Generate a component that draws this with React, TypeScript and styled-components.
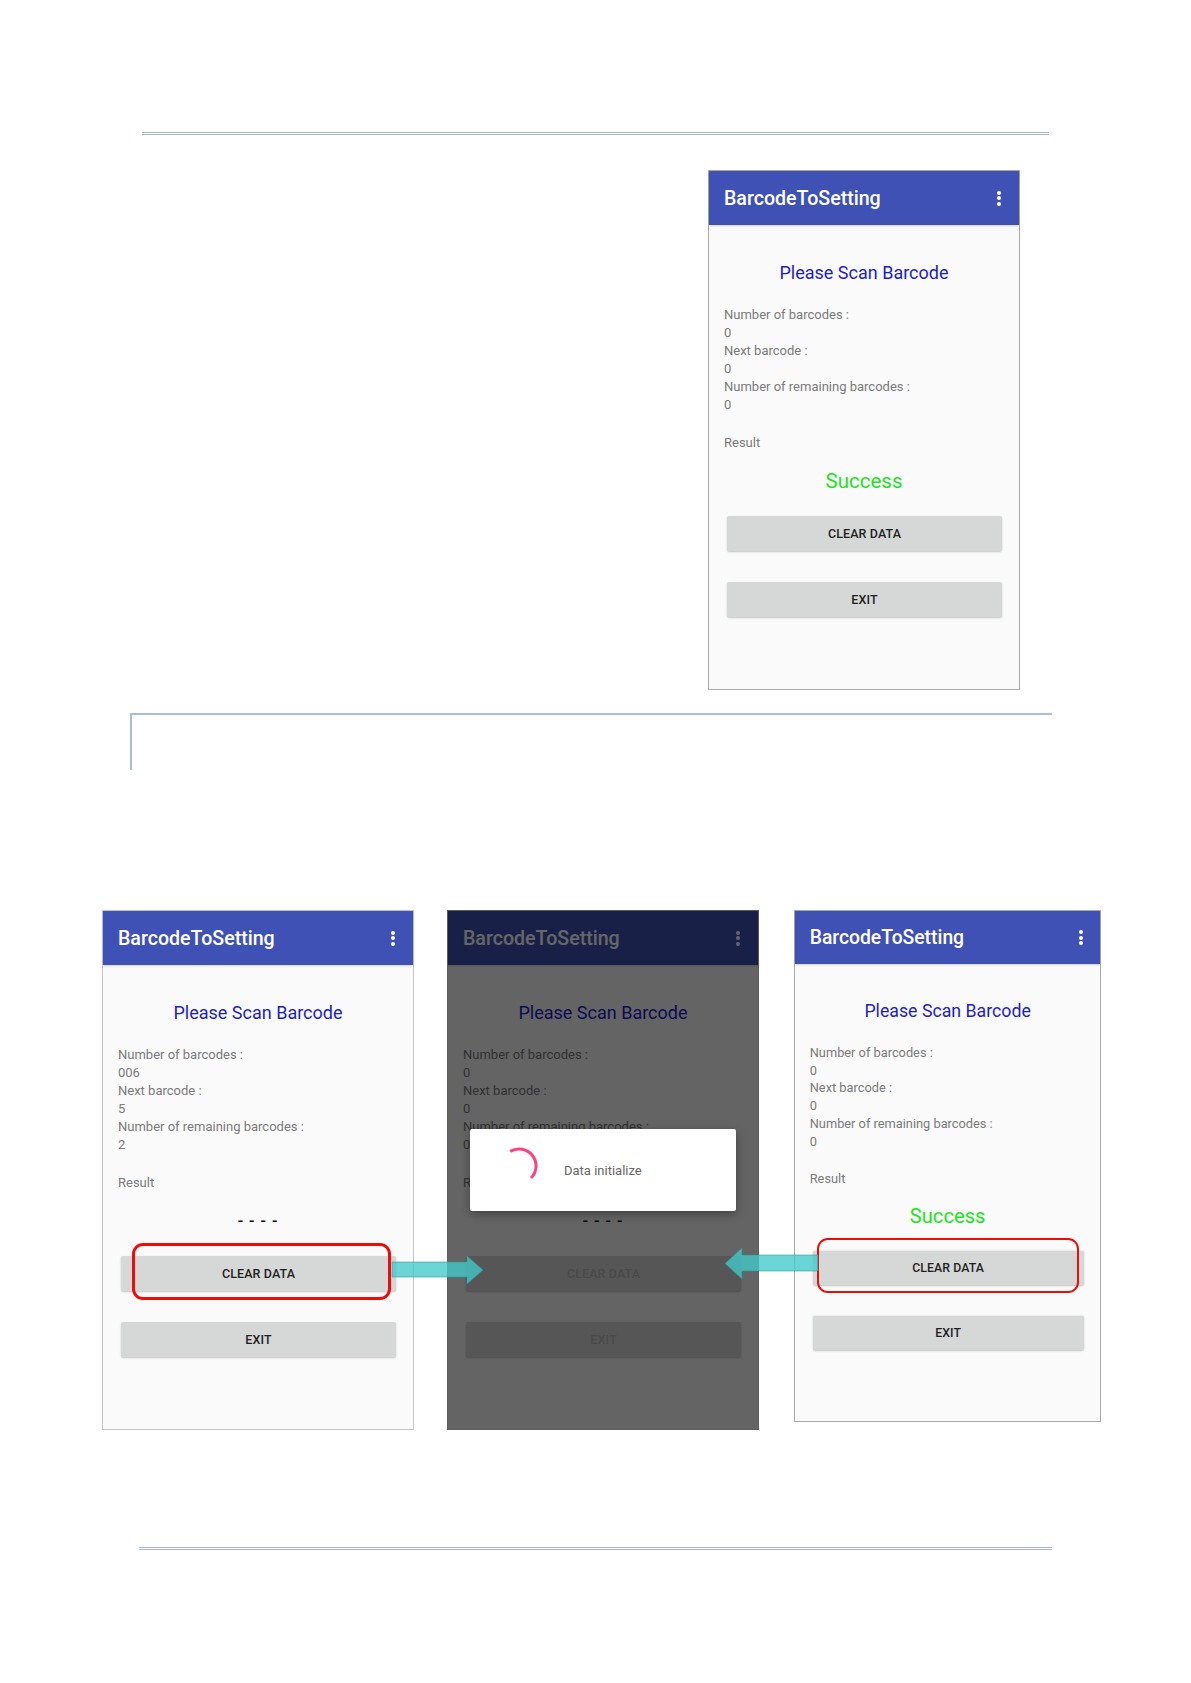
import styled, { createGlobalStyle } from 'styled-components';

type Offsets = { top: number; right: number; bottom: number; left: number };

const GlobalStyle = createGlobalStyle`
  html, body {
    margin: 0;
    padding: 0;
    background: #ffffff;
  }
  body {
    font-family: Roboto, 'Liberation Sans', sans-serif;
  }
`;

const Page = styled.div`
  width: 1191px;
  height: 1683px;
  box-sizing: border-box;
  padding-top: 132px;
  display: flex;
  flex-direction: column;
  background: #fff;
`;

const DoubleRule = styled.div<{ $left: number; $width: number; $top: number }>`
  margin: ${p => p.$top}px 0 0 ${p => p.$left}px;
  width: ${p => p.$width}px;
  height: 1px;
  border-top: 1px solid #a7b8ca;
  border-bottom: 1px solid #a7b8ca;
`;

const TopSection = styled.div`
  margin-top: 35px;
  padding-left: 708px;
  display: flex;
`;

const Bracket = styled.div`
  margin: 23px 0 0 130px;
  width: 920px;
  height: 55px;
  border-top: 2px solid #a9bedb;
  border-left: 2px solid #a9bedb;
`;

const Row = styled.div`
  position: relative;
  margin-top: 140px;
  padding-left: 102px;
  display: flex;
  align-items: flex-start;
  gap: 33px;
`;

const Phone = styled.div<{ $border: string; $zoom?: number; $shift?: number }>`
  position: relative;
  width: 312px;
  height: 520px;
  box-sizing: border-box;
  flex-shrink: 0;
  border: 1px solid ${p => p.$border};
  background: #fafafa;
  display: flex;
  flex-direction: column;
  zoom: ${p => p.$zoom ?? 1};
  margin-left: ${p => p.$shift ?? 0}px;
`;

const AppBar = styled.div`
  position: relative;
  height: 54px;
  flex-shrink: 0;
  background: #3f51b5;
  display: flex;
  align-items: center;
  justify-content: space-between;
  padding: 0 18px 0 15px;
  box-shadow: 0 1px 2px rgba(0, 0, 0, 0.16);
`;

const Title = styled.span`
  color: #ffffff;
  font-size: 19.6px;
  font-weight: 500;
`;

const Kebab = styled.div`
  display: flex;
  flex-direction: column;
  gap: 1.5px;
`;

const Dot = styled.span`
  width: 4px;
  height: 4px;
  border-radius: 50%;
  background: #ffffff;
`;

const Body = styled.div`
  flex: 1;
  display: flex;
  flex-direction: column;
  padding: 0 15px;
`;

const Heading = styled.div`
  margin-top: 37px;
  text-align: center;
  font-size: 18px;
  line-height: 22px;
  color: #1d1dcc;
`;

const InfoList = styled.div`
  margin-top: 22px;
  font-size: 13px;
  line-height: 18px;
  color: #7a7a7a;
`;

const InfoLine = styled.div`
  white-space: nowrap;
`;

const ResultLabel = styled.div`
  margin-top: 20px;
  font-size: 13px;
  line-height: 18px;
  color: #7a7a7a;
`;

const ResultValue = styled.div<{ $kind: 'success' | 'dashes' }>`
  margin-top: 16px;
  height: 26px;
  line-height: 26px;
  text-align: center;
  font-size: ${p => (p.$kind === 'success' ? '20.5px' : '16px')};
  font-weight: ${p => (p.$kind === 'success' ? 400 : 500)};
  letter-spacing: ${p => (p.$kind === 'success' ? '0' : '1px')};
  color: ${p => (p.$kind === 'success' ? '#1fe31f' : '#111111')};
`;

const ActionSlot = styled.div<{ $gap: number }>`
  position: relative;
  margin: ${p => p.$gap}px 2px 0 3px;
`;

const ActionButton = styled.div<{ $disabled?: boolean }>`
  height: 35px;
  background: #d6d7d7;
  border-radius: 2px;
  box-shadow: 0 1px 2px rgba(0, 0, 0, 0.22);
  display: flex;
  align-items: center;
  justify-content: center;
  font-size: 12.5px;
  font-weight: 500;
  color: ${p => (p.$disabled ? '#b8b8b8' : '#1f1f1f')};
  letter-spacing: 0.1px;
`;

const Highlight = styled.div<{ $o: Offsets }>`
  position: absolute;
  top: ${p => p.$o.top}px;
  right: ${p => p.$o.right}px;
  bottom: ${p => p.$o.bottom}px;
  left: ${p => p.$o.left}px;
  border: 3px solid #ee0b0b;
  border-radius: 11px;
  pointer-events: none;
`;

const Scrim = styled.div`
  position: absolute;
  inset: 0;
  z-index: 2;
  background: rgba(0, 0, 0, 0.6);
  display: flex;
  align-items: center;
  justify-content: center;
`;

const Dialog = styled.div`
  width: 266px;
  height: 82px;
  box-sizing: border-box;
  background: #ffffff;
  border-radius: 2px;
  box-shadow: 0 3px 10px rgba(0, 0, 0, 0.35);
  display: flex;
  align-items: center;
  padding-left: 29px;
  gap: 25px;
`;

const Spinner = styled.svg`
  width: 40px;
  height: 40px;
  margin-top: -8px;
`;

const DialogText = styled.span`
  font-size: 13px;
  color: #666666;
`;

const Arrow = styled.svg<{ $left: number; $top: number }>`
  position: absolute;
  left: ${p => p.$left}px;
  top: ${p => p.$top}px;
  z-index: 3;
  overflow: visible;
`;

type ScreenProps = {
  values: [string, string, string];
  result: 'success' | 'dashes';
  border: string;
  zoom?: number;
  shift?: number;
  highlight?: Offsets;
  busy?: boolean;
};

function Screen({ values, result, border, zoom, shift, highlight, busy }: ScreenProps) {
  return (
    <Phone $border={border} $zoom={zoom} $shift={shift}>
      <AppBar>
        <Title>BarcodeToSetting</Title>
        <Kebab>
          <Dot />
          <Dot />
          <Dot />
        </Kebab>
      </AppBar>
      <Body>
        <Heading>Please Scan Barcode</Heading>
        <InfoList>
          <InfoLine>Number of barcodes :</InfoLine>
          <InfoLine>{values[0]}</InfoLine>
          <InfoLine>Next barcode :</InfoLine>
          <InfoLine>{values[1]}</InfoLine>
          <InfoLine>Number of remaining barcodes :</InfoLine>
          <InfoLine>{values[2]}</InfoLine>
        </InfoList>
        <ResultLabel>Result</ResultLabel>
        <ResultValue $kind={result}>{result === 'success' ? 'Success' : '- - - -'}</ResultValue>
        <ActionSlot $gap={22}>
          <ActionButton $disabled={busy}>CLEAR DATA</ActionButton>
          {highlight && <Highlight $o={highlight} />}
        </ActionSlot>
        <ActionSlot $gap={31}>
          <ActionButton $disabled={busy}>EXIT</ActionButton>
        </ActionSlot>
      </Body>
      {busy && (
        <Scrim>
          <Dialog>
            <Spinner viewBox="0 0 40 40">
              <path
                d="M 11.2 5.4 A 17 17 0 0 1 32 32"
                fill="none"
                stroke="#ff4081"
                strokeWidth="3"
              />
            </Spinner>
            <DialogText>Data initialize</DialogText>
          </Dialog>
        </Scrim>
      )}
    </Phone>
  );
}

export default function App() {
  return (
    <>
      <GlobalStyle />
      <Page>
        <DoubleRule $top={0} $left={142} $width={907} />
        <TopSection>
          <Screen values={['0', '0', '0']} result="success" border="#a9a9a9" />
        </TopSection>
        <Bracket />
        <Row>
          <Screen
            values={['006', '5', '2']}
            result="dashes"
            border="#c4c4c4"
            highlight={{ top: -13, right: 5, bottom: -9, left: 11 }}
          />
          <Screen values={['0', '0', '0']} result="dashes" border="#5e5e5e" busy />
          <Screen
            values={['0', '0', '0']}
            result="success"
            border="#a9a9a9"
            zoom={0.985}
            shift={2}
            highlight={{ top: -13, right: 5, bottom: -8, left: 4 }}
          />
          <Arrow $left={392} $top={346} width="91" height="28" viewBox="0 0 91 28">
            <polygon
              points="0,6 75,6 75,0 91,14 75,28 75,21 0,21"
              fill="rgba(67,203,203,0.78)"
              stroke="rgba(45,150,150,0.55)"
              strokeWidth="1"
            />
          </Arrow>
          <Arrow $left={725} $top={338} width="93" height="31" viewBox="0 0 93 31">
            <polygon
              points="93,7 17,7 17,0 0,15.5 17,31 17,23 93,23"
              fill="rgba(67,203,203,0.78)"
              stroke="rgba(45,150,150,0.55)"
              strokeWidth="1"
            />
          </Arrow>
        </Row>
        <DoubleRule $top={117} $left={139} $width={913} />
      </Page>
    </>
  );
}
